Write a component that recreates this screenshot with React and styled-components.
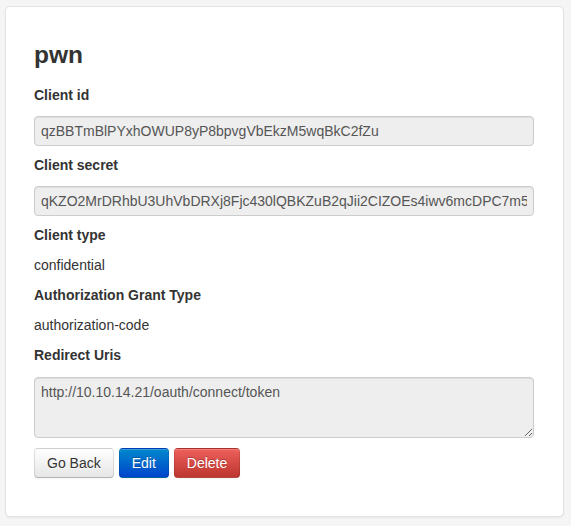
import React from "react";
import styled, { createGlobalStyle } from "styled-components";

const GlobalStyle = createGlobalStyle`
  html, body {
    margin: 0;
    padding: 0;
    background: #f5f5f5;
  }
  body {
    font-family: "Liberation Sans", Arial, Helvetica, sans-serif;
    font-size: 14px;
    line-height: 20px;
    color: #333;
  }
  * { box-sizing: border-box; }
`;

const Page = styled.div`
  padding: 6px 7px 8px 5px;
`;

const Card = styled.div`
  display: flex;
  flex-direction: column;
  background: #fff;
  border: 1px solid #e3e3e3;
  border-radius: 5px;
  box-shadow: 0 1px 2px rgba(0, 0, 0, 0.06);
  padding: 28px 29px 38px 28px;
`;

const Title = styled.h3`
  margin: 0 0 10px;
  font-size: 24.5px;
  line-height: 40px;
  font-weight: bold;
  color: #333;
`;

const Label = styled.h5`
  margin: 0 0 10px;
  font-size: 14px;
  line-height: 20px;
  font-weight: bold;
  color: #333;
`;

const Value = styled.p`
  margin: 0 0 10px;
  font-size: 14px;
  line-height: 20px;
  color: #333;
`;

const fieldBase = `
  display: block;
  width: 100%;
  font-family: "Liberation Sans", Arial, Helvetica, sans-serif;
  font-size: 14px;
  line-height: 20px;
  color: #555;
  background: #eee;
  border: 1px solid #ccc;
  border-radius: 4px;
  box-shadow: inset 0 1px 1px rgba(0, 0, 0, 0.075);
  padding: 4px 6px;
  outline: none;
`;

const ReadInput = styled.input`
  ${fieldBase}
  height: 30px;
  margin: 1px 0 9px;
`;

const ReadArea = styled.textarea`
  ${fieldBase}
  height: 61px;
  margin: 2px 0 10px;
  resize: vertical;
`;

const Actions = styled.div`
  display: flex;
  gap: 5px;
`;

const variants = {
  default: `
    color: #333;
    text-shadow: 0 1px 1px rgba(255,255,255,0.75);
    background: linear-gradient(to bottom, #ffffff, #e6e6e6);
    border-color: rgba(0,0,0,0.1) rgba(0,0,0,0.1) #b3b3b3;
  `,
  primary: `
    color: #fff;
    text-shadow: 0 -1px 0 rgba(0,0,0,0.25);
    background: linear-gradient(to bottom, #0088cc, #0044cc);
    border-color: rgba(0,0,0,0.1) rgba(0,0,0,0.1) rgba(0,0,0,0.25);
  `,
  danger: `
    color: #fff;
    text-shadow: 0 -1px 0 rgba(0,0,0,0.25);
    background: linear-gradient(to bottom, #ee5f5b, #bd362f);
    border-color: rgba(0,0,0,0.1) rgba(0,0,0,0.1) rgba(0,0,0,0.25);
  `,
};

const Button = styled.button`
  display: inline-block;
  height: 30px;
  padding: 4px 12px;
  font-family: "Liberation Sans", Arial, Helvetica, sans-serif;
  font-size: 14px;
  line-height: 20px;
  border: 1px solid;
  border-radius: 4px;
  box-shadow: inset 0 1px 0 rgba(255,255,255,0.2), 0 1px 2px rgba(0,0,0,0.05);
  cursor: pointer;
  ${(p) => variants[p.$variant || "default"]}
`;

export default function App() {
  return (
    <>
      <GlobalStyle />
      <Page>
        <Card>
          <Title>pwn</Title>
          <Label>Client id</Label>
          <ReadInput readOnly value="qzBBTmBlPYxhOWUP8yP8bpvgVbEkzM5wqBkC2fZu" />
          <Label>Client secret</Label>
          <ReadInput
            readOnly
            value="qKZO2MrDRhbU3UhVbDRXj8Fjc430lQBKZuB2qJii2CIZOEs4iwv6mcDPC7m5Qx8Rk2LmZ"
          />
          <Label>Client type</Label>
          <Value>confidential</Value>
          <Label>Authorization Grant Type</Label>
          <Value>authorization-code</Value>
          <Label>Redirect Uris</Label>
          <ReadArea readOnly value="http://10.10.14.21/oauth/connect/token" />
          <Actions>
            <Button>Go Back</Button>
            <Button $variant="primary">Edit</Button>
            <Button $variant="danger">Delete</Button>
          </Actions>
        </Card>
      </Page>
    </>
  );
}
